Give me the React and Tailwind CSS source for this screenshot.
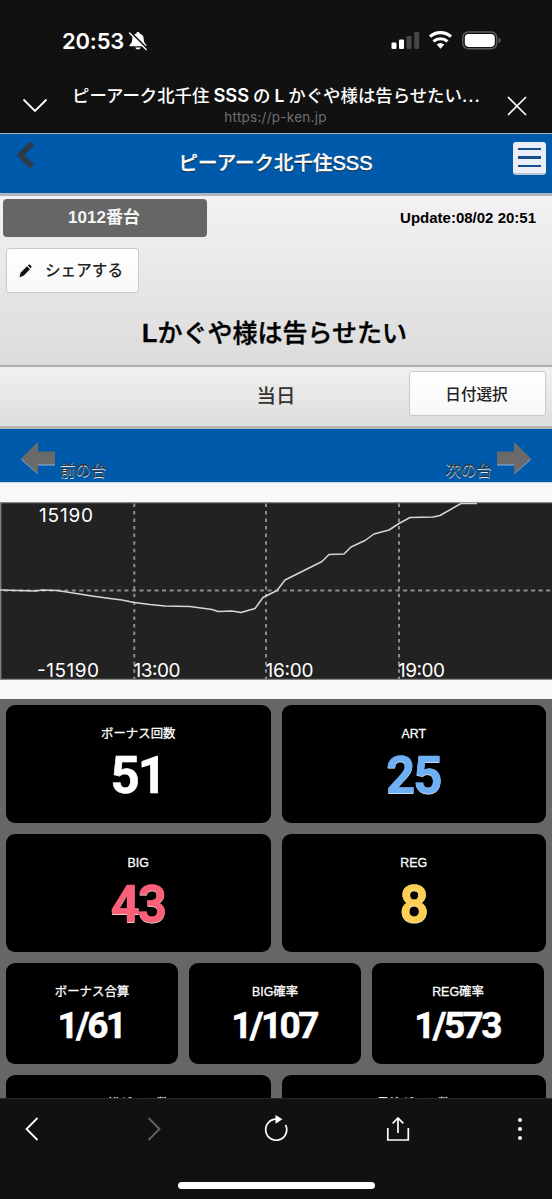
import React from 'react';

const profit = '0,590 36,591 42,590 57,590.5 70,592.5 92,596 110,598.5 122,600 134,602.5 150,604.5 165,606 190,606.5 212,609.5 218,611.5 232,611 241,612.5 255,608.5 263,597.5 277,590.5 285,580 300,572.5 322,561.5 329,554.5 344,554 351,547 365,540.5 374,534 389,530 399,523.5 410,517.5 433,517 440,515.5 461,503.5 477,503.5';

function StatusBar() {
  return (
    <div className="flex h-[82px] shrink-0 items-center pl-[62px] pr-[51px] text-white">
      <span className="text-[22px] leading-[26px] font-semibold font-['Inter',sans-serif] tracking-[-0.2px]">20:53</span>
      <svg className="ml-[4px]" width="20" height="20" viewBox="0 0 20 20">
        <path d="M10 1c-1 0-1.500.6-1.600 1.400C6 3 4.300 5 4.300 7.500c0 4-1.500 5-2.700 6.500-.4.600-.1 1.200.6 1.200h15.600c.7 0 1-.6.6-1.200-1.200-1.500-2.700-2.500-2.700-6.500 0-2.500-1.700-4.500-4.100-5.100C11.500 1.600 11 1 10 1zM7.200 16.500c.4 1.300 1.500 2 2.800 2s2.400-.7 2.800-2z" fill="#fff" />
        <path d="M2.400 1.200L18.600 17.200" stroke="#111" strokeWidth="2" />
        <path d="M1.500 2L18.200 18.500" stroke="#fff" strokeWidth="1.400" strokeLinecap="round" />
      </svg>
      <svg className="ml-auto" width="111" height="22" viewBox="0 0 111 22">
        <g transform="translate(.5 1)">
          <rect x="1" y="11.500" width="5" height="6.500" rx="1.300" fill="#fff" />
          <rect x="8.500" y="8.500" width="5" height="9.500" rx="1.300" fill="#fff" />
          <rect x="16" y="5" width="5" height="13" rx="1.300" fill="#454545" />
          <rect x="23.700" y="1" width="5" height="17" rx="1.300" fill="#454545" />
          <path d="M39.500 7.200a16 16 0 0 1 21 0" fill="none" stroke="#fff" strokeWidth="3.200" transform="translate(0 -1.600)" />
          <path d="M43 10.300a10.500 10.500 0 0 1 14 0" fill="none" stroke="#fff" strokeWidth="3" />
          <path d="M46.200 13.500a6 6 0 0 1 7.600 0L50 17.700z" fill="#fff" />
          <rect x="72.300" y="1" width="34" height="16.800" rx="5.500" fill="none" stroke="#5c5c5c" strokeWidth="1.500" />
          <rect x="74.300" y="2.900" width="30" height="13" rx="3.800" fill="#fff" />
          <path d="M108 6.700c1.700.6 2.200 1.600 2.200 2.800s-.5 2.200-2.200 2.800z" fill="#5c5c5c" />
        </g>
      </svg>
    </div>
  );
}

function BrowserTitle() {
  return (
    <div className="flex h-[51px] shrink-0 text-white">
      <svg className="ml-[22px] mt-[15px] shrink-0" width="26" height="16" viewBox="0 0 26 16">
        <path d="M1.500 2.500L13 14 24.500 2.500" fill="none" stroke="#fff" strokeWidth="1.800" />
      </svg>
      <div className="ml-[24px] w-[410px] shrink-0 text-center">
        <div className="whitespace-nowrap text-left text-[17.4px] leading-[26px] font-medium font-['Inter','Noto_Sans_CJK_JP',sans-serif]">
          ピーアーク北千住<span className="mx-[4px] text-[18.300px] font-semibold">SSS</span>の<span className="mx-[4px] font-semibold">L</span>かぐや様は告らせたい<span className="tracking-[1px]">...</span>
        </div>
        <div className="ml-[-3px] text-[13.5px] leading-[16px] tracking-[0.25px] text-[#6f6f6f] font-['Inter',sans-serif]">https://p-ken.jp</div>
      </div>
      <svg className="ml-[25px] mt-[14px] shrink-0" width="20" height="20" viewBox="0 0 20 20">
        <path d="M1 1l18 18M19 1L1 19" fill="none" stroke="#fff" strokeWidth="1.700" />
      </svg>
    </div>
  );
}

function SiteHeader() {
  return (
    <div className="flex h-[63px] shrink-0 justify-between border-t border-b-[3px] border-t-[#9fb4c8] border-b-[#adb7c1] bg-[#005aab]">
      <svg className="ml-[17px] mt-[8px] shrink-0" width="19" height="27" viewBox="0 0 19 27">
        <path d="M15.500 1.500L4 13l11.500 11.500" fill="none" stroke="#303a45" strokeWidth="5.500" transform="translate(-.5 0)" />
      </svg>
      <div className="pl-[2px] pt-[14px] text-[19.500px] leading-[30px] text-white font-['Liberation_Sans','Noto_Sans_CJK_JP',sans-serif] [text-shadow:0_1px_1px_#111]">
        <span className="font-medium [-webkit-text-stroke:.3px_white]">ピーアーク北千住</span><span className="text-[20px] [-webkit-text-stroke:.5px_white]">SSS</span>
      </div>
      <div className="mr-[6px] mt-[8px] flex h-[33px] w-[33px] shrink-0 flex-col justify-center gap-[6px] rounded-[3px] border-b-2 border-[#b9c4d3] bg-[#e9eef7] px-[5px]">
        <div className="h-[2.5px] bg-[#174f8e]" />
        <div className="h-[2.5px] bg-[#174f8e]" />
        <div className="h-[2.5px] bg-[#174f8e]" />
      </div>
    </div>
  );
}

function MachinePanel() {
  return (
    <div className="flex h-[171px] shrink-0 flex-col border-b-2 border-[#adadad] bg-linear-to-b from-[#f3f1f4] to-[#dcdcdc] text-black font-['Liberation_Sans','Noto_Sans_CJK_JP',sans-serif]">
      <div className="flex items-center justify-between pl-[3px] pr-[16px] pt-[3px]">
        <div className="h-[38px] w-[204px] rounded-[4px] bg-[#666] pr-[2px] text-center text-[17px] leading-[38px] font-bold text-[#f5f5f5]">1012番台</div>
        <div className="text-[15px] font-bold">Update:08/02 20:51</div>
      </div>
      <div className="ml-[6px] mt-[11px] flex h-[45px] w-[133px] items-center rounded-[3px] border border-[#c9c9c9] bg-linear-to-b from-white to-[#f8f8f8] pl-[12px]">
        <svg width="13" height="14" viewBox="0 0 13 14">
          <path d="M.5 13.200L1.500 8.700 8 2.200l3 3-6.500 6.500zM8.800 1.500l.8-.8c.4-.4 1-.4 1.400 0l1.300 1.300c.4.400.4 1 0 1.400l-.8.900z" fill="#111" />
        </svg>
        <span className="ml-[13px] text-[15.6px] leading-[24px] font-medium text-[#222]">シェアする</span>
      </div>
      <h1 className="mt-[22px] pr-[3px] text-center text-[25px] leading-[36px] font-medium [-webkit-text-stroke:.4px_black]"><b>L</b>かぐや様は告らせたい</h1>
    </div>
  );
}

function DateRow() {
  return (
    <div className="grid h-[62px] shrink-0 grid-cols-[1fr_150px_1fr] border-b-[3px] border-[#b9b5af] bg-linear-to-b from-[#f0f0f0] to-[#dedede] font-['Noto_Sans_CJK_JP',sans-serif]">
      <div />
      <div className="pt-[13px] text-center text-[19.4px] leading-[30px] font-medium text-[#333]">当日</div>
      <div className="mr-[6px] mt-[4px] h-[45px] w-[137px] justify-self-end rounded-[3px] border border-[#c9c9c9] bg-linear-to-b from-white to-[#f8f8f8] pr-[2px] text-center text-[15.6px] leading-[42px] font-medium text-[#222]">日付選択</div>
    </div>
  );
}

function MachineNav() {
  return (
    <div className="flex h-[54px] shrink-0 justify-between border-b border-[#c8dcf0] bg-[#005aab] px-[20px] font-['Noto_Sans_CJK_JP',sans-serif] text-[15.500px] leading-[24px] text-[#333] [text-shadow:0_1px_0_#dfe8f2]">
      <div className="flex">
        <svg className="mt-[12px]" width="36" height="36" viewBox="0 0 36 36">
          <path d="M1 18.500L18 2.500v9h17v13H18v9z" fill="#8cb4dc" />
          <path d="M1 17.500L18 1v9.500h17v13H18V33z" fill="#6a6a6a" />
        </svg>
        <span className="ml-[4px] mt-[28px]">前の台</span>
      </div>
      <div className="flex">
        <span className="mr-[4px] mt-[28px]">次の台</span>
        <svg className="mt-[12px]" width="36" height="36" viewBox="0 0 36 36">
          <path d="M35 18.500L18 2.500v9H1v13h17v9z" fill="#8cb4dc" />
          <path d="M35 17.500L18 1v9.500H1v13h17V33z" fill="#6a6a6a" />
        </svg>
      </div>
    </div>
  );
}

function ProfitChart() {
  return (
    <div className="h-[216px] shrink-0 bg-[#f8f8f8] pt-[19px]">
      <svg className="block overflow-visible" width="552" height="178" viewBox="0 502 552 178">
        <rect x="0" y="502" width="552" height="178" fill="#222" />
        <path d="M552 502.700H.7V679.300H552" fill="none" stroke="#858585" strokeWidth="1.300" />
        <path d="M134.300 503.500V679M266 503.500V679M399 503.500V679" stroke="#8c8c8c" strokeWidth="2" strokeDasharray="3.500 4.030" />
        <path d="M4 590.500H552" stroke="#8c8c8c" strokeWidth="2" strokeDasharray="4 3.530" />
        <polyline points={profit} fill="none" stroke="#d6d6d6" strokeWidth="1.500" strokeLinejoin="round" />
        <g fill="#fff" fontFamily="Inter, sans-serif" fontSize="19">
          <text x="39" y="522.300" textLength="54">15190</text>
          <text x="37" y="677.300" textLength="62">-15190</text>
          <text x="133.500" y="677.300" textLength="47">13:00</text>
          <text x="265.500" y="677.300" textLength="48">16:00</text>
          <text x="398" y="677.300" textLength="47">19:00</text>
        </g>
      </svg>
    </div>
  );
}

function StatCard({ label, value, tone = 'text-white [-webkit-text-stroke:.6px_white]' }) {
  return (
    <div className="h-[118px] rounded-[9px] bg-black pt-[19px] text-center">
      <div className="text-[12.4px] leading-[20px] text-white [-webkit-text-stroke:.3px_white]">{label}</div>
      <div className={`pt-[6px] pr-[1px] text-[51px] leading-[52px] font-bold tracking-[-2px] font-['Roboto',sans-serif] ${tone}`}>{value}</div>
    </div>
  );
}

function RateCard({ label, value }) {
  return (
    <div className="h-[101px] rounded-[9px] bg-black pt-[19px] text-center text-white">
      <div className="text-[12.4px] leading-[20px] [-webkit-text-stroke:.3px_white]">{label}</div>
      <div className="pt-[3px] pr-[2px] text-[37px] leading-[42px] font-bold tracking-[-2.600px] font-['Roboto',sans-serif] [-webkit-text-stroke:.5px_white]">{value}</div>
    </div>
  );
}

function Stats() {
  return (
    <div className="flex h-[399px] shrink-0 flex-col gap-[11px] overflow-hidden bg-[#666] px-[6px] pt-[6px] font-['Liberation_Sans','Noto_Sans_CJK_JP',sans-serif]">
      <div className="grid grid-cols-2 gap-[11px]">
        <StatCard label="ボーナス回数" value="51" />
        <StatCard label="ART" value="25" tone="text-[#6eb0f6] [-webkit-text-stroke:.6px_#6eb0f6] [text-shadow:0_1px_0_#eee]" />
        <StatCard label="BIG" value="43" tone="text-[#fb6079] [-webkit-text-stroke:.6px_#fb6079] [text-shadow:0_1px_0_#eee]" />
        <StatCard label="REG" value="8" tone="text-[#ffcf55] [-webkit-text-stroke:.6px_#ffcf55] [text-shadow:0_1px_0_#eee]" />
      </div>
      <div className="mr-[2px] grid grid-cols-3 gap-[11px]">
        <RateCard label="ボーナス合算" value="1/61" />
        <RateCard label="BIG確率" value="1/107" />
        <RateCard label="REG確率" value="1/573" />
      </div>
      <div className="grid grid-cols-2 gap-[11px]">
        <StatCard label="総ゲーム数" value="" />
        <StatCard label="最終ゲーム数" value="" />
      </div>
    </div>
  );
}

function Toolbar() {
  return (
    <div className="flex h-[101px] shrink-0 flex-col items-center border-t border-[#2b2b2b]">
      <div className="grid w-full grid-cols-[64px_180px_64px_180px_64px] items-center pt-[16px]">
        <svg className="justify-self-center" width="16" height="26" viewBox="0 0 16 26"><path d="M13.500 2L2.500 13l11 11" fill="none" stroke="#fff" strokeWidth="1.800" /></svg>
        <svg className="justify-self-center" width="16" height="26" viewBox="0 0 16 26"><path d="M2.500 2l11 11-11 11" fill="none" stroke="#666" strokeWidth="1.800" /></svg>
        <svg className="justify-self-center" width="26" height="28" viewBox="0 0 26 28">
          <path d="M13 4.200A10.500 10.500 0 1 0 22.500 9.800" fill="none" stroke="#fff" strokeWidth="1.700" />
          <path d="M12.500 0l7 4.300-7 4.500z" fill="#fff" />
        </svg>
        <svg className="justify-self-center" width="24" height="26" viewBox="0 0 24 26">
          <path d="M1.800 12v12h20.500V12M12 17V2.500M6.700 7.300L12 2l5.300 5.300" fill="none" stroke="#fff" strokeWidth="1.700" />
        </svg>
        <svg className="justify-self-center" width="16" height="26" viewBox="0 0 16 26" fill="#fff"><circle cx="8" cy="4" r="2" /><circle cx="8" cy="13" r="2" /><circle cx="8" cy="22" r="2" /></svg>
      </div>
      <div className="mt-[39px] h-[7px] w-[197px] rounded-full bg-white" />
    </div>
  );
}

export default function App() {
  return (
    <div className="flex h-[1199px] w-[552px] flex-col overflow-hidden bg-[#111]">
      <StatusBar />
      <BrowserTitle />
      <SiteHeader />
      <MachinePanel />
      <DateRow />
      <MachineNav />
      <ProfitChart />
      <Stats />
      <Toolbar />
    </div>
  );
}
